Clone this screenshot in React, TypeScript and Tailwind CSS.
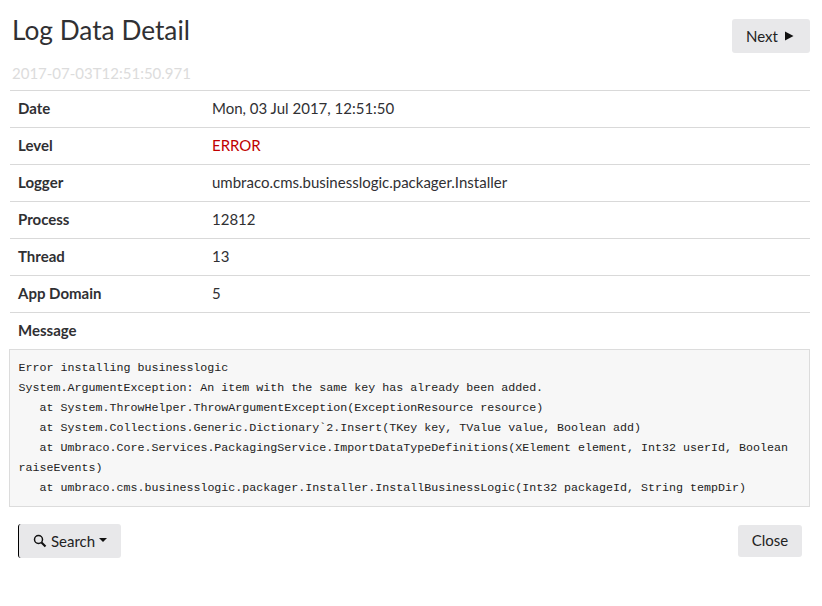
import { type FC } from 'react';

const rows = [
  { label: 'Date', value: 'Mon, 03 Jul 2017, 12:51:50' },
  { label: 'Level', value: 'ERROR', className: 'text-[#c00000]' },
  { label: 'Logger', value: 'umbraco.cms.businesslogic.packager.Installer' },
  { label: 'Process', value: '12812' },
  { label: 'Thread', value: '13' },
  { label: 'App Domain', value: '5' },
];

const message = `Error installing businesslogic
System.ArgumentException: An item with the same key has already been added.
   at System.ThrowHelper.ThrowArgumentException(ExceptionResource resource)
   at System.Collections.Generic.Dictionary\`2.Insert(TKey key, TValue value, Boolean add)
   at Umbraco.Core.Services.PackagingService.ImportDataTypeDefinitions(XElement element, Int32 userId, Boolean raiseEvents)
   at umbraco.cms.businesslogic.packager.Installer.InstallBusinessLogic(Int32 packageId, String tempDir)`;

const Row: FC<{ label: string; value?: string; className?: string }> = ({ label, value, className }) => (
  <div className="flex h-[37px] items-center border-t border-[#d9d9d9] px-2 pb-[2px]">
    <div className="w-[194px] font-bold">{label}</div>
    <div className={className}>{value}</div>
  </div>
);

export default function App() {
  return (
    <div className="h-[606px] w-[822px] bg-white pl-[10px] pr-[12px] font-['Lato','Carlito','Liberation_Sans',sans-serif] text-[15px] text-[#303033]">
      <div className="flex items-start justify-between pt-[19px]">
        <div>
          <h1 className="pl-[2px] text-[26.25px] leading-[23px]">Log Data Detail</h1>
          <div className="mt-[21px] pl-[2px] text-[15px] leading-[20px] text-[#dcdcdc]">2017-07-03T12:51:50.971</div>
        </div>
        <button className="flex h-[34px] w-[78px] items-center justify-center gap-[7px] rounded-[3px] bg-[#e8e8ea] pr-[2px] text-[#222]">
          Next
          <svg width="9" height="10" viewBox="0 0 9 10" className="mb-[1px]">
            <path d="M0 0.5 L8.5 5 L0 9.5 Z" fill="#111" />
          </svg>
        </button>
      </div>
      <div className="mt-[7px]">
        {rows.map((r) => (
          <Row key={r.label} {...r} />
        ))}
        <Row label="Message" />
      </div>
      <pre className="-ml-px whitespace-pre-wrap border border-[#dcdcdc] bg-[#f7f7f7] pl-[8.5px] pr-[8px] pb-[8px] pt-[8px] font-['Liberation_Mono',monospace] text-[11.67px] leading-[20px] text-[#222]">
        {message}
      </pre>
      <div className="mt-[17px] flex items-center justify-between pl-[8px] pr-[8px]">
        <button className="flex h-[34px] w-[103px] items-center justify-center gap-[4px] rounded-[3px] border-l border-l-black bg-[#e8e8ea] text-[#222]">
          <svg width="14" height="14" viewBox="0 0 14 14" fill="none" stroke="#111">
            <circle cx="5.5" cy="5.5" r="4" strokeWidth="1.5" />
            <path d="M8.5 8.5 L12.5 12.5" strokeWidth="2.2" />
          </svg>
          Search
          <span className="mb-[3px] border-x-[4px] border-t-[4px] border-x-transparent border-t-[#111]" />
        </button>
        <button className="h-[32px] w-[64px] rounded-[3px] bg-[#e8e8ea] pb-[2px] text-[#222]">Close</button>
      </div>
    </div>
  );
}
